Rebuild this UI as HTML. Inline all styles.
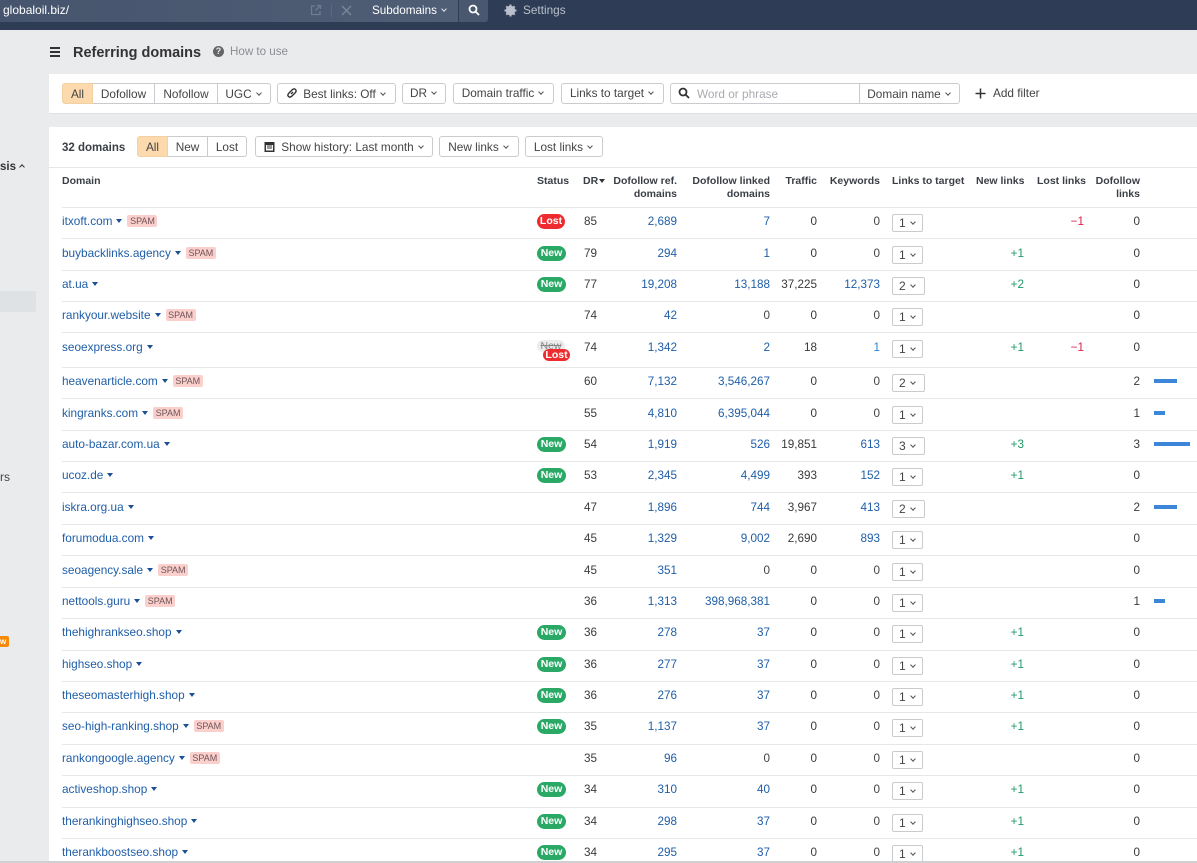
<!DOCTYPE html>
<html><head><meta charset="utf-8"><style>
*{box-sizing:border-box}
html,body{margin:0;padding:0}
body{width:1197px;height:863px;overflow:hidden;position:relative;background:#eaebed;font-family:"Liberation Sans",sans-serif;font-size:12px;color:#3a3a3a;letter-spacing:0}
.a{position:absolute;white-space:nowrap}
.btn{position:absolute;background:#fff;border:1px solid #c9cbce;border-radius:3px;height:21px;line-height:20px;text-align:center;white-space:nowrap;color:#444;font-size:11.800px}
.btn.on{background:#fdd9ae;border-color:#f3cfa4}
.btn.u{line-height:18px}
.cv{display:inline-block;width:4px;height:4px;border-right:1px solid #555;border-bottom:1px solid #555;transform:rotate(45deg);margin:0 2px 3px 5px}
.l{position:absolute;left:62px;right:0;height:1px;background:#e6e7e9}
.r{position:absolute;left:0;width:1197px;height:16px;line-height:16px}
.d{position:absolute;left:62px;color:#1f5ea8;white-space:nowrap;font-size:11.800px}
.d i{display:inline-block;border-left:3.500px solid transparent;border-right:3.500px solid transparent;border-top:4px solid #1b4f96;margin:0 0 1px 4px;vertical-align:middle}
.d b{display:inline-block;font-weight:normal;font-size:9px;line-height:13px;height:12px;width:30px;text-align:center;background:#fbd0cc;color:#6e5458;border-radius:2px;margin-left:5px;vertical-align:1px}
.n{position:absolute;text-align:right;width:80px;top:1px;font-size:11.700px}
.dr{left:517px}.rf{left:597px;color:#1f5ea8}.lk{left:690px;color:#1f5ea8}.tr{left:737px}.kw{left:800px;color:#1f5ea8}.nl{left:944px;color:#1f9a6a}.ll{left:1004px;color:#dc1f45}.df{left:1060px}
.z{color:#444}
.p{position:absolute;left:537px;top:1px;height:15px;line-height:15px;width:29px;border-radius:8px;text-align:center;color:#fff;font-weight:bold;font-size:10.500px;background:#2aa866}
.p.x{background:#ee2b2f;width:28px}
.s{position:absolute;left:892px;top:1px;height:18px;width:31px;border:1px solid #c9cbce;border-radius:2px;background:#fff;line-height:17px;padding-left:6px;color:#444}
.s.w{width:33px}
.s .cv{margin-left:5px}
.bar{position:absolute;left:1154px;top:6px;height:4px;background:#3b86d8}
.h{position:absolute;font-weight:bold;font-size:10.500px;line-height:13px;color:#3a3f45;text-align:right;white-space:nowrap}
</style></head><body>

<div class="a" style="left:0;top:0;width:1197px;height:30px;background:#2e3c56"></div>
<div class="a" style="left:0;top:0;width:458px;height:22px;background:linear-gradient(90deg,#46556d,#4f5d75)"></div>
<div class="a" style="left:459px;top:0;width:29px;height:22px;background:#4a586f;border-radius:0 0 3px 0"></div>
<div class="a" style="left:3px;top:2px;line-height:16px;color:#fff;font-size:12px">globaloil.biz/</div>
<svg class="a" style="left:310px;top:4px" width="12" height="12" viewBox="0 0 12 12" fill="none" stroke="#6f7c90" stroke-width="1.3"><path d="M5 2H1.500V10.500H10V7M7 1.500H10.500V5M10.500 1.500L5.500 6.500"/></svg>
<div class="a" style="left:331px;top:4px;width:1px;height:13px;background:#5b687e"></div>
<svg class="a" style="left:341px;top:5px" width="11" height="11" viewBox="0 0 11 11" stroke="#7b879a" stroke-width="1.300"><path d="M1 1L10 10M10 1L1 10"/></svg>
<div class="a" style="left:372px;top:3px;line-height:16px;color:#fff;font-size:11.700px">Subdomains<span class="cv" style="border-color:#dfe3ea"></span></div>
<svg class="a" style="left:468px;top:4px" width="12" height="12" viewBox="0 0 12 12" fill="none" stroke="#fff" stroke-width="1.800"><circle cx="5" cy="5" r="3.500"/><path d="M7.500 7.500L11 11"/></svg>
<svg class="a" style="left:504px;top:4px" width="13" height="13" viewBox="0 0 13 13"><circle cx="6.500" cy="6.500" r="3.500" fill="none" stroke="#b9c0cc" stroke-width="2.500"/><path d="M6.500 0.500V12.500M0.500 6.500H12.500M2.300 2.300L10.700 10.700M10.700 2.300L2.300 10.700" stroke="#b9c0cc" stroke-width="2"/></svg>
<div class="a" style="left:523px;top:2px;line-height:16px;color:#b9c0cc;font-size:11.800px">Settings</div>

<div class="a" style="left:50px;top:47px;width:10px;height:10px;border-top:2px solid #333;border-bottom:2px solid #333"></div>
<div class="a" style="left:50px;top:51px;width:10px;height:2px;background:#333"></div>
<div class="a" style="left:73px;top:44px;line-height:18px;font-size:14.500px;font-weight:bold;color:#333">Referring domains</div>
<div class="a" style="left:213px;top:46px;width:11px;height:11px;border-radius:50%;background:#666;color:#eaebed;font-size:9px;line-height:11px;text-align:center;font-weight:bold">?</div>
<div class="a" style="left:230px;top:44px;line-height:16px;color:#8a8d92;font-size:11.600px">How to use</div>

<div class="a" style="left:49px;top:74px;width:1148px;height:40px;background:#fff;border-bottom:1px solid #e0e1e3"></div>
<div class="btn on" style="left:62px;top:83px;width:31px;border-radius:3px 0 0 3px">All</div>
<div class="btn" style="left:93px;top:83px;width:62px;border-radius:0;border-left:0">Dofollow</div>
<div class="btn" style="left:155px;top:83px;width:63px;border-radius:0;border-left:0">Nofollow</div>
<div class="btn" style="left:218px;top:83px;width:53px;border-radius:0 3px 3px 0;border-left:0">UGC<span class="cv"></span></div>
<div class="btn" style="left:277px;top:83px;width:119px;padding-left:17px">Best links: Off<span class="cv"></span></div>
<svg class="a" style="left:286px;top:87px" width="12" height="12" viewBox="0 0 12 12" fill="none" stroke="#333" stroke-width="1.400"><path d="M5 7L7 5M4.500 4.500L6 3Q8 1 9.500 2.500T9 6L7.500 7.500M4.500 4.500L3 6Q1 8 2.500 9.500T6 9L7.500 7.500"/></svg>
<div class="btn u" style="left:402px;top:83px;width:44px">DR<span class="cv"></span></div>
<div class="btn u" style="left:453px;top:83px;width:101px">Domain traffic<span class="cv"></span></div>
<div class="btn u" style="left:561px;top:83px;width:103px">Links to target<span class="cv"></span></div>
<div class="btn" style="left:670px;top:83px;width:190px;border-radius:3px 0 0 3px;text-align:left;padding-left:26px;color:#a9abb0">Word or phrase</div>
<svg class="a" style="left:678px;top:87px" width="12" height="12" viewBox="0 0 12 12" fill="none" stroke="#333" stroke-width="1.800"><circle cx="5" cy="5" r="3.500"/><path d="M7.500 7.500L11 11"/></svg>
<div class="btn" style="left:859px;top:83px;width:101px;border-radius:0 3px 3px 0">Domain name<span class="cv"></span></div>
<svg class="a" style="left:975px;top:88px" width="11" height="11" viewBox="0 0 11 11" stroke="#333" stroke-width="1.500"><path d="M5.500 0.500V10.500M0.500 5.500H10.500"/></svg>
<div class="a" style="left:993px;top:85px;line-height:16px;color:#444;font-size:11.800px">Add filter</div>

<div class="a" style="left:49px;top:127px;width:1148px;height:734px;background:#fff"></div>
<div class="a" style="left:62px;top:140px;line-height:16px;font-weight:bold;font-size:11.500px;color:#3a3f45">32 domains</div>
<div class="btn on" style="left:137px;top:136px;width:31px;border-radius:3px 0 0 3px">All</div>
<div class="btn" style="left:168px;top:136px;width:40px;border-radius:0;border-left:0">New</div>
<div class="btn" style="left:208px;top:136px;width:39px;border-radius:0 3px 3px 0;border-left:0">Lost</div>
<div class="btn" style="left:255px;top:136px;width:178px;padding-left:18px">Show history: Last month<span class="cv"></span></div>
<svg class="a" style="left:264px;top:141px" width="11" height="11" viewBox="0 0 11 11"><rect x="0.500" y="1" width="10" height="10" fill="#333"/><rect x="2" y="4" width="7" height="5.500" fill="#fff"/><path d="M3 5H8M3 7H8" stroke="#333"/></svg>
<div class="btn" style="left:439px;top:136px;width:80px">New links<span class="cv"></span></div>
<div class="btn" style="left:525px;top:136px;width:78px">Lost links<span class="cv"></span></div>
<div class="a" style="left:49px;top:167px;width:1148px;height:1px;background:#e6e7e9"></div>

<div class="h" style="left:62px;top:175px">Domain</div>
<div class="h" style="left:537px;top:175px">Status</div>
<div class="h" style="left:583px;top:175px">DR</div>
<div class="a" style="left:599px;top:179px;border-left:3px solid transparent;border-right:3px solid transparent;border-top:4px solid #333"></div>
<div class="h" style="right:520px;top:175px">Dofollow ref.<br>domains</div>
<div class="h" style="right:427px;top:175px">Dofollow linked<br>domains</div>
<div class="h" style="right:380px;top:175px">Traffic</div>
<div class="h" style="right:317px;top:175px">Keywords</div>
<div class="h" style="left:892px;top:175px">Links to target</div>
<div class="h" style="left:976px;top:175px">New links</div>
<div class="h" style="left:1037px;top:175px">Lost links</div>
<div class="h" style="right:57px;top:175px">Dofollow<br>links</div>

<div class="l" style="top:207px"></div><div class="l" style="top:238px"></div><div class="l" style="top:270px"></div><div class="l" style="top:301px"></div><div class="l" style="top:332px"></div><div class="l" style="top:367px"></div><div class="l" style="top:398px"></div><div class="l" style="top:430px"></div><div class="l" style="top:461px"></div><div class="l" style="top:492px"></div><div class="l" style="top:524px"></div><div class="l" style="top:555px"></div><div class="l" style="top:587px"></div><div class="l" style="top:618px"></div><div class="l" style="top:650px"></div><div class="l" style="top:681px"></div><div class="l" style="top:712px"></div><div class="l" style="top:744px"></div><div class="l" style="top:775px"></div><div class="l" style="top:807px"></div><div class="l" style="top:838px"></div>

<div class="r" style="top:213px"><div class="d">itxoft.com<i></i><b>SPAM</b></div><div class="p x">Lost</div><div class="n dr">85</div><div class="n rf">2,689</div><div class="n lk">7</div><div class="n tr">0</div><div class="n kw z">0</div><div class="s">1<span class="cv"></span></div><div class="n ll">−1</div><div class="n df">0</div></div>
<div class="r" style="top:245px"><div class="d">buybacklinks.agency<i></i><b>SPAM</b></div><div class="p">New</div><div class="n dr">79</div><div class="n rf">294</div><div class="n lk">1</div><div class="n tr">0</div><div class="n kw z">0</div><div class="s">1<span class="cv"></span></div><div class="n nl">+1</div><div class="n df">0</div></div>
<div class="r" style="top:276px"><div class="d">at.ua<i></i></div><div class="p">New</div><div class="n dr">77</div><div class="n rf">19,208</div><div class="n lk">13,188</div><div class="n tr">37,225</div><div class="n kw">12,373</div><div class="s w">2<span class="cv"></span></div><div class="n nl">+2</div><div class="n df">0</div></div>
<div class="r" style="top:307px"><div class="d">rankyour.website<i></i><b>SPAM</b></div><div class="n dr">74</div><div class="n rf">42</div><div class="n lk z">0</div><div class="n tr">0</div><div class="n kw z">0</div><div class="s">1<span class="cv"></span></div><div class="n df">0</div></div>
<div class="r" style="top:339px"><div class="d">seoexpress.org<i></i></div><div class="p" style="top:1px;height:12px;width:28px;line-height:12px;background:#ececed;color:#888;font-weight:normal;text-decoration:line-through">New</div><div class="p x" style="left:543px;top:10px;width:27px;height:12px;line-height:12px">Lost</div><div class="n dr">74</div><div class="n rf">1,342</div><div class="n lk">2</div><div class="n tr">18</div><div class="n kw" style="color:#2a86d8">1</div><div class="s">1<span class="cv"></span></div><div class="n nl">+1</div><div class="n ll">−1</div><div class="n df">0</div></div>
<div class="r" style="top:373px"><div class="d">heavenarticle.com<i></i><b>SPAM</b></div><div class="n dr">60</div><div class="n rf">7,132</div><div class="n lk">3,546,267</div><div class="n tr">0</div><div class="n kw z">0</div><div class="s w">2<span class="cv"></span></div><div class="n df">2</div><div class="bar" style="width:23px"></div></div>
<div class="r" style="top:405px"><div class="d">kingranks.com<i></i><b>SPAM</b></div><div class="n dr">55</div><div class="n rf">4,810</div><div class="n lk">6,395,044</div><div class="n tr">0</div><div class="n kw z">0</div><div class="s">1<span class="cv"></span></div><div class="n df">1</div><div class="bar" style="width:11px"></div></div>
<div class="r" style="top:436px"><div class="d">auto-bazar.com.ua<i></i></div><div class="p">New</div><div class="n dr">54</div><div class="n rf">1,919</div><div class="n lk">526</div><div class="n tr">19,851</div><div class="n kw">613</div><div class="s w">3<span class="cv"></span></div><div class="n nl">+3</div><div class="n df">3</div><div class="bar" style="width:36px"></div></div>
<div class="r" style="top:467px"><div class="d">ucoz.de<i></i></div><div class="p">New</div><div class="n dr">53</div><div class="n rf">2,345</div><div class="n lk">4,499</div><div class="n tr">393</div><div class="n kw">152</div><div class="s">1<span class="cv"></span></div><div class="n nl">+1</div><div class="n df">0</div></div>
<div class="r" style="top:499px"><div class="d">iskra.org.ua<i></i></div><div class="n dr">47</div><div class="n rf">1,896</div><div class="n lk">744</div><div class="n tr">3,967</div><div class="n kw">413</div><div class="s w">2<span class="cv"></span></div><div class="n df">2</div><div class="bar" style="width:23px"></div></div>
<div class="r" style="top:530px"><div class="d">forumodua.com<i></i></div><div class="n dr">45</div><div class="n rf">1,329</div><div class="n lk">9,002</div><div class="n tr">2,690</div><div class="n kw">893</div><div class="s">1<span class="cv"></span></div><div class="n df">0</div></div>
<div class="r" style="top:562px"><div class="d">seoagency.sale<i></i><b>SPAM</b></div><div class="n dr">45</div><div class="n rf">351</div><div class="n lk z">0</div><div class="n tr">0</div><div class="n kw z">0</div><div class="s">1<span class="cv"></span></div><div class="n df">0</div></div>
<div class="r" style="top:593px"><div class="d">nettools.guru<i></i><b>SPAM</b></div><div class="n dr">36</div><div class="n rf">1,313</div><div class="n lk">398,968,381</div><div class="n tr">0</div><div class="n kw z">0</div><div class="s">1<span class="cv"></span></div><div class="n df">1</div><div class="bar" style="width:11px"></div></div>
<div class="r" style="top:624px"><div class="d">thehighrankseo.shop<i></i></div><div class="p">New</div><div class="n dr">36</div><div class="n rf">278</div><div class="n lk">37</div><div class="n tr">0</div><div class="n kw z">0</div><div class="s">1<span class="cv"></span></div><div class="n nl">+1</div><div class="n df">0</div></div>
<div class="r" style="top:656px"><div class="d">highseo.shop<i></i></div><div class="p">New</div><div class="n dr">36</div><div class="n rf">277</div><div class="n lk">37</div><div class="n tr">0</div><div class="n kw z">0</div><div class="s">1<span class="cv"></span></div><div class="n nl">+1</div><div class="n df">0</div></div>
<div class="r" style="top:687px"><div class="d">theseomasterhigh.shop<i></i></div><div class="p">New</div><div class="n dr">36</div><div class="n rf">276</div><div class="n lk">37</div><div class="n tr">0</div><div class="n kw z">0</div><div class="s">1<span class="cv"></span></div><div class="n nl">+1</div><div class="n df">0</div></div>
<div class="r" style="top:718px"><div class="d">seo-high-ranking.shop<i></i><b>SPAM</b></div><div class="p">New</div><div class="n dr">35</div><div class="n rf">1,137</div><div class="n lk">37</div><div class="n tr">0</div><div class="n kw z">0</div><div class="s">1<span class="cv"></span></div><div class="n nl">+1</div><div class="n df">0</div></div>
<div class="r" style="top:750px"><div class="d">rankongoogle.agency<i></i><b>SPAM</b></div><div class="n dr">35</div><div class="n rf">96</div><div class="n lk z">0</div><div class="n tr">0</div><div class="n kw z">0</div><div class="s">1<span class="cv"></span></div><div class="n df">0</div></div>
<div class="r" style="top:781px"><div class="d">activeshop.shop<i></i></div><div class="p">New</div><div class="n dr">34</div><div class="n rf">310</div><div class="n lk">40</div><div class="n tr">0</div><div class="n kw z">0</div><div class="s">1<span class="cv"></span></div><div class="n nl">+1</div><div class="n df">0</div></div>
<div class="r" style="top:813px"><div class="d">therankinghighseo.shop<i></i></div><div class="p">New</div><div class="n dr">34</div><div class="n rf">298</div><div class="n lk">37</div><div class="n tr">0</div><div class="n kw z">0</div><div class="s">1<span class="cv"></span></div><div class="n nl">+1</div><div class="n df">0</div></div>
<div class="r" style="top:844px"><div class="d">therankboostseo.shop<i></i></div><div class="p">New</div><div class="n dr">34</div><div class="n rf">295</div><div class="n lk">37</div><div class="n tr">0</div><div class="n kw z">0</div><div class="s">1<span class="cv"></span></div><div class="n nl">+1</div><div class="n df">0</div></div>

<div class="a" style="left:0;top:159px;line-height:16px;font-weight:bold;font-size:11.500px;color:#333">sis<span style="display:inline-block;width:4px;height:4px;border-left:1px solid #333;border-top:1px solid #333;transform:rotate(45deg);margin:0 0 1px 4px"></span></div>
<div class="a" style="left:0;top:291px;width:36px;height:21px;background:#dfe2e5;border-radius:0 2px 2px 0"></div>
<div class="a" style="left:0;top:469px;line-height:16px;color:#444">rs</div>
<div class="a" style="left:0;top:636px;width:9px;height:11px;background:#f88a0a;border-radius:0 2px 2px 0;color:#fff;font-size:8px;line-height:11px;font-weight:bold">w</div>
<div class="a" style="left:0;top:861px;width:1197px;height:2px;background:#cfd0d2"></div>
</body></html>
